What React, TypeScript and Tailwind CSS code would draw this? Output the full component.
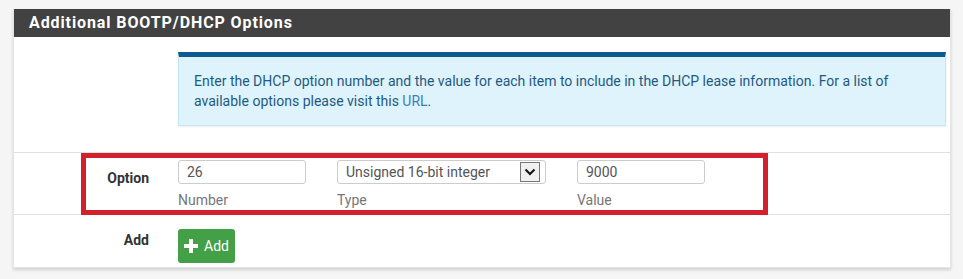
import React from "react";

function Field({ label, children, width }: { label: string; children: React.ReactNode; width: string }) {
    return (
        <div className={`flex flex-col ${width}`}>
            {children}
            <span className="text-[14px] text-[#777] mt-[7px] leading-[18px]">{label}</span>
        </div>
    );
}

export default function App() {
    return (
        <div className="w-[963px] h-[279px] bg-[#f5f5f5] pt-[9px] pl-[13px] font-['Roboto',sans-serif]">
            <div className="w-[938px] bg-white shadow-[0_2px_3px_rgba(0,0,0,0.15)] border border-[#e4e4e4] border-t-0">
                {/* header */}
                <div className="h-[28px] bg-[#424242] pl-[15px] flex items-center">
                    <h2 className="text-white text-[16px] font-bold tracking-[0.9px]">Additional BOOTP/DHCP Options</h2>
                </div>

                {/* info */}
                <div className="pl-[164px] pr-[4px] pt-[15px] pb-[26px]">
                    <div className="bg-[#dff3fc] border border-[#c7e6f3] border-t-[5px] border-t-[#0c5b91] px-[15px] pt-[14px] pb-[14px] text-[14px] leading-[20px] text-[#1d5a83] shadow-[0_1px_2px_rgba(0,0,0,0.08)]">
                        <p>
                            Enter the DHCP option number and the value for each item to include in the DHCP lease information. For a list of
                            available options please visit this <span className="text-[#3c7fb7]">URL</span>.
                        </p>
                    </div>
                </div>

                {/* option row */}
                <div className="border-t border-[#e0e0e0] h-[62px] relative flex">
                    <div className="absolute left-[67px] top-0 w-[687px] h-[62px] border-[5px] border-[#d4202d] pointer-events-none" />
                    <div className="w-[164px] pr-[29px] pt-[15px] text-right text-[14px] font-bold text-[#333]">Option</div>
                    <div className="flex gap-[31px] pt-[7px]">
                        <Field label="Number" width="w-[128px]">
                            <div className="h-[24px] border border-[#ccc] rounded-[3px] px-[8px] flex items-center text-[14px] text-[#555]">26</div>
                        </Field>
                        <Field label="Type" width="w-[209px]">
                            <div className="h-[24px] border border-[#ccc] rounded-[3px] pl-[8px] pr-[5px] flex items-center justify-between text-[14px] text-[#555]">
                                <span>Unsigned 16-bit integer</span>
                                <span className="w-[20px] h-[20px] border border-[#777] bg-[#f0f0f0] flex items-center justify-center">
                                    <svg width="12" height="8" viewBox="0 0 12 8">
                                        <path d="M1.5 1.5 L6 6 L10.5 1.5" fill="none" stroke="#111" strokeWidth="2" />
                                    </svg>
                                </span>
                            </div>
                        </Field>
                        <Field label="Value" width="w-[128px]">
                            <div className="h-[24px] border border-[#ccc] rounded-[3px] px-[8px] flex items-center text-[14px] text-[#555]">9000</div>
                        </Field>
                    </div>
                </div>

                {/* add row */}
                <div className="border-t border-[#e0e0e0] h-[53px] flex">
                    <div className="w-[164px] pr-[29px] pt-[15px] text-right text-[14px] font-bold text-[#333]">Add</div>
                    <div className="pt-[14px]">
                        <button className="h-[34px] px-[6px] bg-[#43a047] rounded-[3px] text-white text-[14px] flex items-center gap-[6px]">
                            <svg width="14" height="14" viewBox="0 0 14 14">
                                <path d="M5 0h4v5h5v4H9v5H5V9H0V5h5z" fill="#fff" />
                            </svg>
                            Add
                        </button>
                    </div>
                </div>
            </div>
        </div>
    );
}
